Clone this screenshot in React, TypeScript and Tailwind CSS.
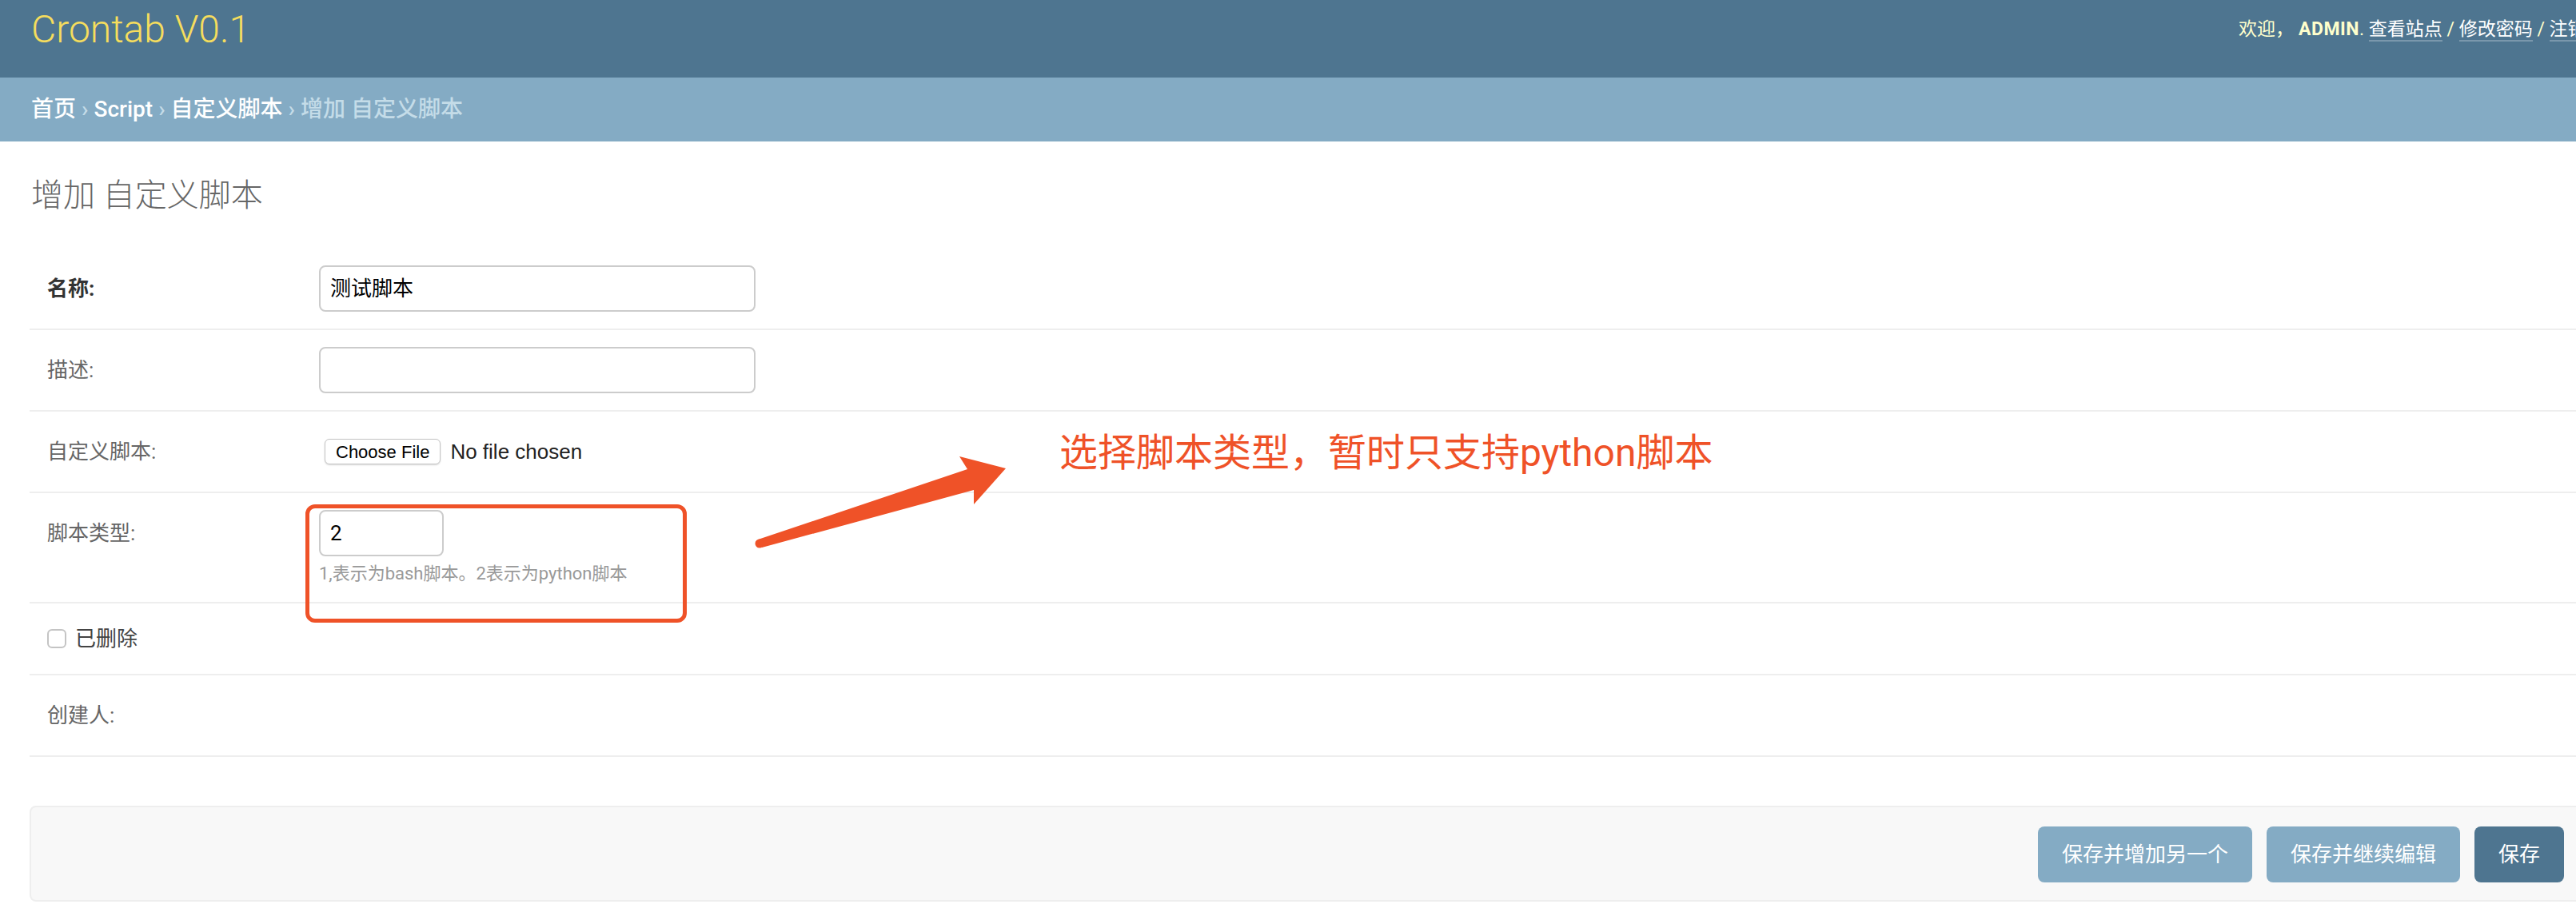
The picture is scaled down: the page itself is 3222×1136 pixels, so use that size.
import type { ReactNode } from 'react'

const sans = "font-['Roboto','Noto_Sans_CJK_SC',sans-serif]"

type RowProps = {
  children: ReactNode
  label?: string
  required?: boolean
}

function FormRow({ children, label, required }: RowProps) {
  return (
    <div className="flex items-start border-b-2 border-[#eeeeee] py-[21px] pl-[22px]">
      {label !== undefined && (
        <div
          className={
            required
              ? 'w-[340px] shrink-0 text-[26px] leading-[58px] font-bold text-[#333]'
              : 'w-[340px] shrink-0 text-[26px] leading-[58px] text-[#666]'
          }
        >
          {label}:
        </div>
      )}
      {children}
    </div>
  )
}

export default function App() {
  return (
    <div className={`relative h-[1136px] w-[3222px] overflow-hidden bg-white ${sans}`}>
      <div className="w-[3260px]">
        {/* header */}
        <div className="flex h-[97px] bg-[#4e7590] pl-[39px]">
          <div className="w-[2761px] shrink-0 pt-[9px] text-[48px] leading-[56px] font-light text-[#f5dd5d]">
            Crontab V0.1
          </div>
          <div className="whitespace-nowrap pt-[21px] text-[23px] leading-[32px] text-[#ffffcc]">
            <span>欢迎，</span>
            <span className="ml-[6px] font-bold tracking-[0.5px]">ADMIN</span>
            <span>. </span>
            <a className="border-b-2 border-white/25 text-white">查看站点</a>
            <span> / </span>
            <a className="border-b-2 border-white/25 text-white">修改密码</a>
            <span> / </span>
            <a className="border-b-2 border-white/25 text-white">注销</a>
          </div>
        </div>

        {/* breadcrumbs */}
        <div className="flex h-[80px] items-center bg-[#84abc4] pl-[39px] text-[28px] font-medium text-[#c4dce8]">
          <a className="text-white">首页</a>
          <span className="mx-[7px]">›</span>
          <a className="text-white">Script</a>
          <span className="mx-[7px]">›</span>
          <a className="text-white">自定义脚本</a>
          <span className="mx-[7px]">›</span>
          <span>增加 自定义脚本</span>
        </div>

        {/* content */}
        <div className="pl-[37px] pr-[23px]">
          <h1 className="mt-[44px] pl-[2px] text-[40px] leading-[48px] font-light text-[#666]">增加 自定义脚本</h1>

          <div className="mt-[42px]">
            <FormRow label="名称" required>
              <div className="flex h-[58px] w-[546px] items-center rounded-[8px] border-2 border-[#cccccc] px-[12px] text-[26px] text-black">
                测试脚本
              </div>
            </FormRow>
            <FormRow label="描述">
              <div className="h-[58px] w-[546px] rounded-[8px] border-2 border-[#cccccc]" />
            </FormRow>
            <FormRow label="自定义脚本">
              <div className="flex h-[58px] items-center font-['Liberation_Sans',sans-serif]">
                <div className="ml-[7px] flex h-[32px] items-center rounded-[6px] border border-[#c4c4c4] bg-white px-[13px] text-[22px] text-black shadow-[0_1px_2px_rgba(0,0,0,0.15)]">
                  Choose File
                </div>
                <span className="ml-[12px] text-[26px] text-[#222]">No file chosen</span>
              </div>
            </FormRow>
            <FormRow label="脚本类型">
              <div className="flex flex-col">
                <div className="flex h-[58px] w-[156px] items-center rounded-[8px] border-2 border-[#cccccc] px-[12px] text-[26px] text-black">
                  2
                </div>
                <p className="mt-[8px] text-[22px] leading-[28px] text-[#999]">1,表示为bash脚本。2表示为python脚本</p>
              </div>
            </FormRow>
            <div className="flex h-[90px] items-center border-b-2 border-[#eeeeee] pl-[22px]">
              <span className="h-[24px] w-[24px] rounded-[6px] border-2 border-[#c4c4c4] bg-white" />
              <span className="ml-[11px] text-[26px] text-[#444]">已删除</span>
            </div>
            <FormRow label="创建人">
              <div className="h-[58px]" />
            </FormRow>
          </div>

          {/* submit row */}
          <div className="mt-[61px] flex justify-end gap-[18px] rounded-[8px] border-2 border-[#eeeeee] bg-[#f8f8f8] pt-[24px] pb-[22px] pr-[28px]">
            <button className="h-[70px] rounded-[8px] bg-[#84abc4] px-[30px] text-[26px] text-white" type="button">
              保存并增加另一个
            </button>
            <button className="h-[70px] rounded-[8px] bg-[#84abc4] px-[30px] text-[26px] text-white" type="button">
              保存并继续编辑
            </button>
            <button className="h-[70px] rounded-[8px] bg-[#4e7590] px-[30px] text-[26px] text-white" type="button">
              保存
            </button>
          </div>
        </div>
      </div>

      {/* annotation overlay */}
      <div className="absolute left-[382px] top-[631px] h-[148px] w-[477px] rounded-[12px] border-[5px] border-[#ef5228]" />
      <svg className="absolute left-[940px] top-[560px]" width="330" height="130" viewBox="0 0 330 130">
        <polygon points="8,115 270,27 260,11 318,26 278,71 278,53 13,125" fill="#ef5228" />
        <circle cx="10" cy="120" r="5.5" fill="#ef5228" />
      </svg>
      <div className="absolute left-[1325px] top-[537px] text-[48px] leading-[60px] text-[#ef5228]">
        选择脚本类型，暂时只支持python脚本
      </div>
    </div>
  )
}
